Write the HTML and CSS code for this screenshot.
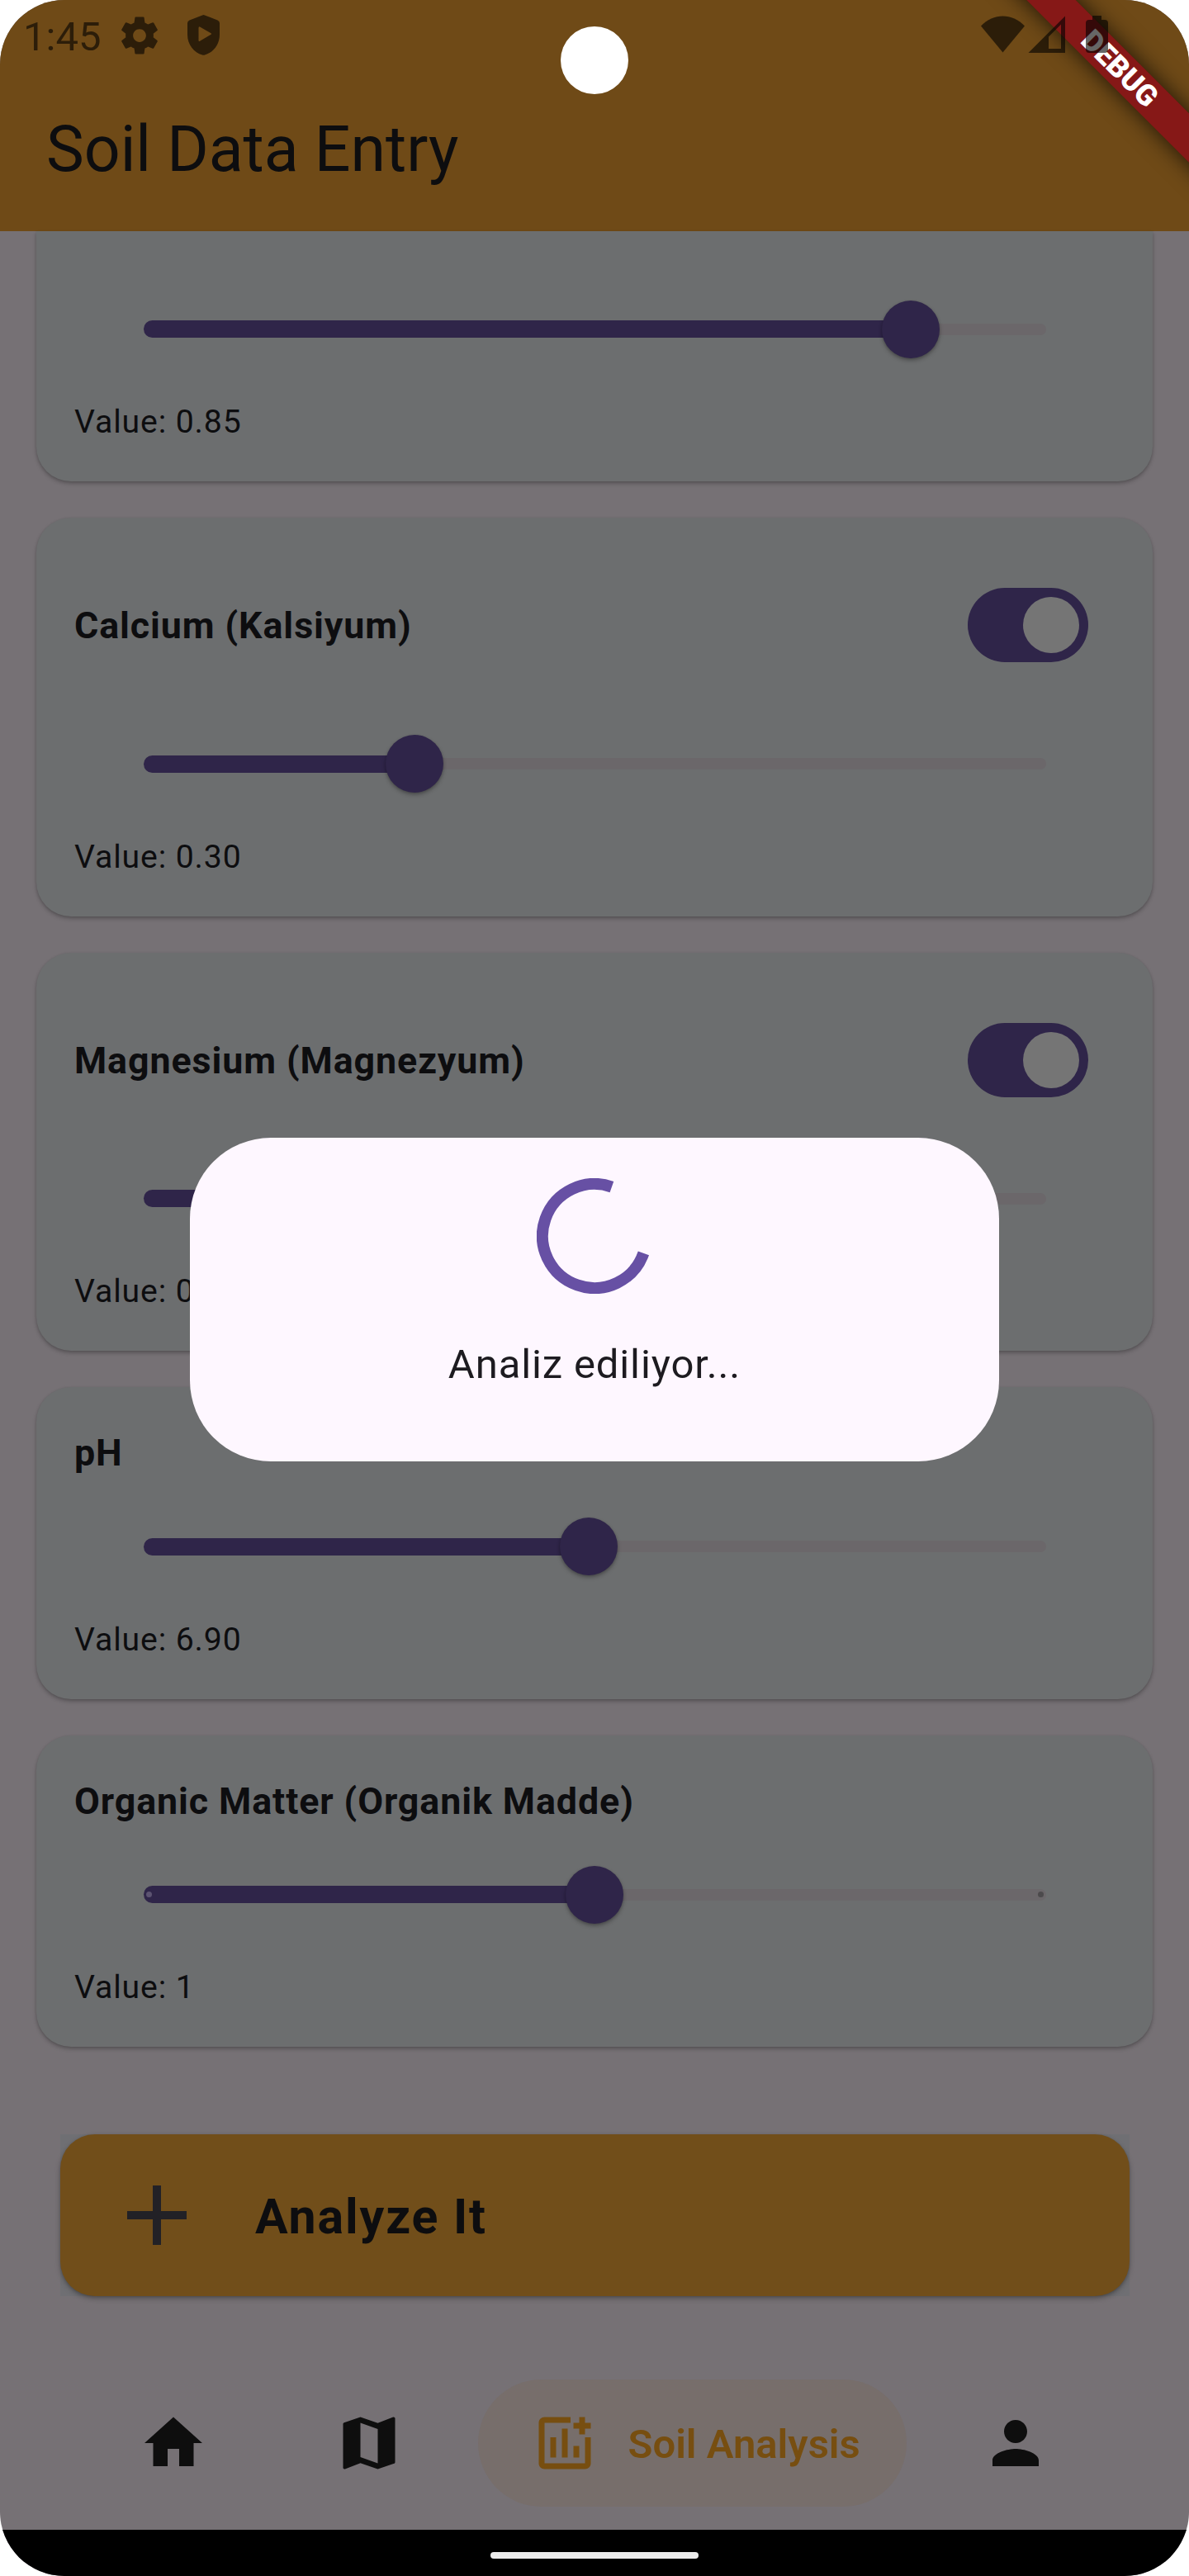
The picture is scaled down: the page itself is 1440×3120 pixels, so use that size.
FILE: index.html
```
<!DOCTYPE html>
<html lang="en">
<head>
<meta charset="utf-8">
<title>Soil Data Entry</title>
<link rel="stylesheet" href="styles.css">
</head>
<body>
<div class="screen">
  <header class="app-bar">
    <div class="status-bar">
      <span class="clock">1:45</span>
      <svg class="gear" viewBox="0 0 24 24"><path d="M19.43 12.98c.04-.32.07-.64.07-.98s-.03-.66-.07-.98l2.11-1.65c.19-.15.24-.42.12-.64l-2-3.46c-.12-.22-.39-.3-.61-.22l-2.49 1c-.52-.4-1.08-.73-1.69-.98l-.38-2.65C14.46 2.18 14.25 2 14 2h-4c-.25 0-.46.18-.49.42l-.38 2.65c-.61.25-1.17.59-1.69.98l-2.49-1c-.23-.09-.49 0-.61.22l-2 3.46c-.13.22-.07.49.12.64l2.11 1.65c-.04.32-.07.65-.07.98s.03.66.07.98l-2.11 1.65c-.19.15-.24.42-.12.64l2 3.46c.12.22.39.3.61.22l2.49-1c.52.4 1.08.73 1.69.98l.38 2.65c.03.24.24.42.49.42h4c.25 0 .46-.18.49-.42l.38-2.65c.61-.25 1.17-.59 1.69-.98l2.49 1c.23.09.49 0 .61-.22l2-3.46c.12-.22.07-.49-.12-.64l-2.11-1.65zM12 15.5c-1.93 0-3.5-1.57-3.5-3.5s1.57-3.5 3.5-3.5 3.5 1.57 3.5 3.5-1.57 3.5-3.5 3.5z"/></svg>
      <svg class="shield" viewBox="0 0 39 49"><path fill-rule="evenodd" d="M18 .5Q19.500 -.3 21 .5L36.500 6.500Q39 7.500 39 10V24C39 36 31 46 21 48.500Q19.500 49.200 18 48.500C8 46 0 36 0 24V10Q0 7.500 2.500 6.500ZM13.500 16V31Q13.500 32.500 15 31.800L28.500 23.800Q29.500 23 28.500 22.200L15 14.400Q13.500 14 13.500 16Z"/></svg>
      <svg class="signals" viewBox="0 0 154 46"><path d="M0 12.500C15 -3.500 38 -3.500 53 12.500L26.500 44.500Z"/><path fill-rule="evenodd" d="M57.500 45L102 .5V45ZM82 25.500V40H97V10.500Z"/><path d="M135 0H146V5H150Q154 5 154 9V41Q154 45 150 45H131Q127 45 127 41V9Q127 5 131 5H135Z"/></svg>
    </div>
    <h1 class="title">Soil Data Entry</h1>
  </header>

  <main class="content">
    <section class="card card-cut">
      <div class="slider"><div class="track"></div><div class="fill" style="width:85%"><i class="thumb"></i></div></div>
      <p class="value">Value: 0.85</p>
    </section>
    <section class="card">
      <div class="row row-tall"><h2>Calcium (Kalsiyum)</h2><div class="switch"><i></i></div></div>
      <div class="slider"><div class="track"></div><div class="fill" style="width:30%"><i class="thumb"></i></div></div>
      <p class="value">Value: 0.30</p>
    </section>
    <section class="card">
      <div class="row row-tall"><h2>Magnesium (Magnezyum)</h2><div class="switch"><i></i></div></div>
      <div class="slider"><div class="track"></div><div class="fill" style="width:30%"><i class="thumb"></i></div></div>
      <p class="value">Value: 0.30</p>
    </section>
    <section class="card">
      <div class="row"><h2>pH</h2></div>
      <div class="slider"><div class="track"></div><div class="fill" style="width:49.3%"><i class="thumb"></i></div></div>
      <p class="value">Value: 6.90</p>
    </section>
    <section class="card">
      <div class="row"><h2>Organic Matter (Organik Madde)</h2></div>
      <div class="slider"><div class="track"></div><div class="fill" style="width:50%"><i class="thumb"></i></div><i class="tick tick-start"></i><i class="tick tick-end"></i></div>
      <p class="value">Value: 1</p>
    </section>
    <div class="fab-wrap">
      <div class="fab">
        <svg class="plus" viewBox="0 0 72 72"><path d="M31 0H41V31H72V41H41V72H31V41H0V31H31Z"/></svg>
        <span>Analyze It</span>
      </div>
    </div>
  </main>

  <nav class="nav">
    <svg class="nav-icon" viewBox="0 0 24 24"><path d="M10 20v-6h4v6h5v-8h3L12 3 2 12h3v8z"/></svg>
    <svg class="nav-icon nav-map" viewBox="0 0 24 24"><path d="M20.500 3l-.16.03L15 5.100 9 3 3.360 4.900c-.21.07-.36.25-.36.48V20.500c0 .28.22.5.5.5l.16-.03L9 18.900l6 2.100 5.640-1.900c.21-.07.36-.25.36-.48V3.500c0-.28-.22-.5-.5-.5zM15 19l-6-2.110V5l6 2.110V19z"/></svg>
    <div class="nav-pill">
      <svg class="nav-icon" viewBox="0 0 24 24"><path d="M14 3v2H5v14h14v-9h2v9c0 1.100-.9 2-2 2H5c-1.100 0-2-.9-2-2V5c0-1.100.9-2 2-2zM7 10h2v7H7zM11 7h2v10h-2zM15 13h2v4h-2zM17 3h2v2h2v2h-2v2h-2V7h-2V5h2z"/></svg>
      <span>Soil Analysis</span>
    </div>
    <svg class="nav-icon" viewBox="0 0 24 24"><path d="M12 12c2.210 0 4-1.790 4-4s-1.790-4-4-4-4 1.790-4 4 1.790 4 4 4zm0 2c-2.670 0-8 1.340-8 4v2h16v-2c0-2.660-5.330-4-8-4z"/></svg>
  </nav>
  <div class="gesture-bar"><i></i></div>

  <div class="debug">DEBUG</div>
  <div class="camera"></div>
  <div class="dialog">
    <svg class="spinner" viewBox="0 0 140 140"><path d="M90.900 10.600A63 63 0 1 0 129.400 90.900"/></svg>
    <p>Analiz ediliyor...</p>
  </div>
</div>
</body>
</html>
```
FILE: styles.css
```
* { box-sizing: border-box; margin: 0; padding: 0; }
body { background: #fff; font-family: Roboto, sans-serif; color: #0d0d0f; }
svg { display: block; flex: none; }

.screen {
  position: relative;
  width: 1440px;
  height: 3120px;
  display: flex;
  flex-direction: column;
  overflow: hidden;
  border-radius: 78px;
  background: #767175;
}

/* app bar */
.app-bar { height: 280px; flex: none; background: #6f4a17; }
.status-bar {
  position: relative;
  z-index: 2;
  display: flex;
  align-items: flex-start;
  height: 84px;
  padding: 16px 98px 0 28px;
  fill: rgba(0, 0, 0, .6);
}
.clock { width: 114px; font-size: 49px; line-height: 57px; color: rgba(0, 0, 0, .6); }
.gear { width: 54px; height: 54px; }
.shield { width: 39px; height: 49px; margin: 2px 0 0 31px; }
.signals { width: 154px; height: 46px; margin: 3px 0 0 auto; }
.title { padding-left: 56px; font-size: 77px; font-weight: 400; line-height: 194px; }

/* parameter cards */
.content { flex: none; height: 2501px; padding: 0 44.5px 0 44px; }
.card {
  height: auto;
  margin-bottom: 44px;
  padding: 45px 46px 37px;
  border-radius: 42px;
  background: #6c6e6f;
  box-shadow: 0 3px 5px rgba(0, 0, 0, .22), 0 1px 3px rgba(0, 0, 0, .1);
}
.card-cut { padding-top: 40.5px; border-radius: 0 0 42px 42px; }
.row { display: flex; align-items: center; height: 70px; }
.row-tall { height: 175px; padding: 0 32px 3px 0; justify-content: space-between; }
h2 { font-size: 44.8px; font-weight: 700; letter-spacing: .9px; line-height: 70px; }
.value { padding-top: .5px; font-size: 39.2px; letter-spacing: .875px; line-height: 69px; }

.switch {
  display: flex;
  align-items: center;
  justify-content: flex-end;
  width: 146px;
  height: 90px;
  margin-bottom: 2px;
  padding-right: 11px;
  border-radius: 45px;
  background: #2f2549;
}
.switch i { width: 68px; height: 68px; border-radius: 50%; background: #757575; }

.slider { position: relative; display: grid; align-items: center; width: 1092.5px; height: 156px; margin-left: 84px; }
.slider > .track, .slider > .fill { grid-area: 1 / 1; }
.track { height: 14px; border-radius: 7px; background: #6b676a; }
.fill {
  display: flex;
  align-items: center;
  justify-content: flex-end;
  height: 21px;
  border-radius: 10.5px 0 0 10.5px;
  background: #2f2549;
}
.thumb {
  flex: none;
  width: 70px;
  height: 70px;
  margin-right: -35px;
  border-radius: 50%;
  background: #2f2549;
  box-shadow: 0 3px 5px rgba(0, 0, 0, .25), 0 1px 3px rgba(0, 0, 0, .15);
}
.tick { position: absolute; top: 74.5px; width: 7px; height: 7px; border-radius: 50%; }
.tick-start { left: 3px; background: #5c5371; }
.tick-end { right: 3px; background: #4c4a4c; }

/* action button */
.fab-wrap { margin: 106px 28px 0 28.5px; background: #6f6f73; }
.fab {
  display: flex;
  align-items: center;
  height: 196px;
  padding-left: 81.5px;
  border-radius: 42px;
  background: #714e1a;
  box-shadow: 0 3px 6px rgba(0, 0, 0, .28), 0 1px 3px rgba(0, 0, 0, .12);
  font-size: 59px;
  font-weight: 700;
  letter-spacing: 1.9px;
}
.plus { width: 72px; height: 72px; margin-right: 83px; fill: #222126; }
.fab span { padding-top: 2px; }

/* bottom navigation */
.nav { display: flex; align-items: center; flex: none; height: 283px; padding: 73px 168px 0; fill: #0e0e0e; }
.nav-icon { width: 84px; height: 84px; }
.nav-map { margin: 0 90px 0 153px; }
.nav-pill {
  display: flex;
  align-items: center;
  width: 519px;
  height: 154px;
  margin-right: 90px;
  padding-left: 62.5px;
  border-radius: 77px;
  background: #776e6b;
  fill: #774e10;
  color: #774e10;
  font-size: 49px;
  font-weight: 600;
  white-space: nowrap;
}
.nav-pill span { padding: 2px 0 0 35px; }
.gesture-bar { display: flex; justify-content: center; flex: none; height: 56px; padding-top: 27px; background: #000; }
.gesture-bar i { width: 252px; height: 8px; border-radius: 4px; background: #ececec; }

/* overlays */
.debug {
  position: absolute;
  z-index: 1;
  top: 62px;
  left: 1106px;
  width: 500px;
  height: 42px;
  transform: rotate(45deg);
  background: #861817;
  box-shadow: 0 0 28px rgba(0, 0, 0, .75);
  color: #fff;
  font-size: 35.7px;
  font-weight: 900;
  line-height: 42px;
  text-align: center;
}
.camera { position: absolute; top: 32px; left: 679px; width: 82px; height: 82px; border-radius: 50%; background: #fff; }
.dialog {
  position: absolute;
  top: 1378px;
  left: 230px;
  display: flex;
  flex-direction: column;
  align-items: center;
  gap: 51px;
  width: 980px;
  height: 392px;
  padding-top: 49px;
  border-radius: 98px;
  background: #fef7ff;
  color: #1d1b20;
}
.spinner { width: 140px; height: 140px; fill: none; stroke: #6750a4; stroke-width: 14; }
.dialog p { font-size: 49px; letter-spacing: .875px; line-height: 70px; }
```
